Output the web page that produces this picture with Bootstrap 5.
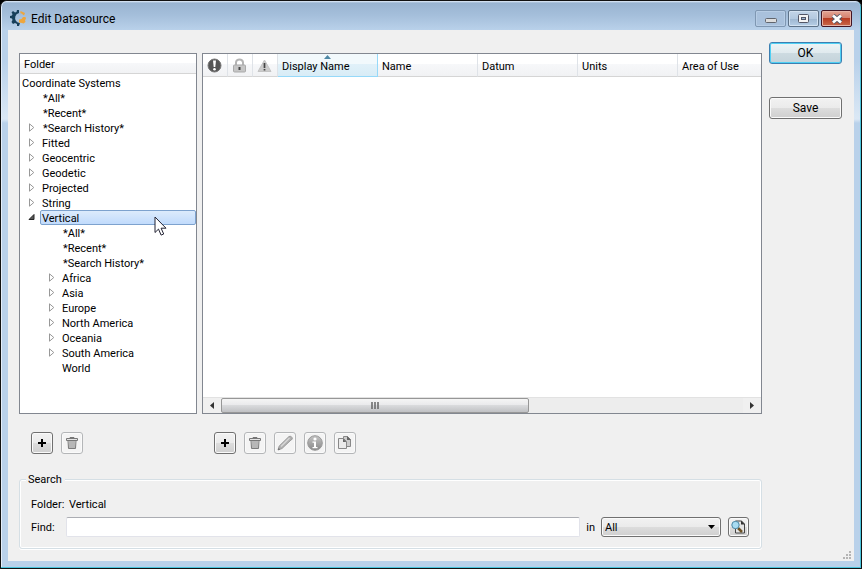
<!DOCTYPE html>
<html lang="en">
<head>
<meta charset="utf-8">
<meta name="viewport" content="width=device-width, initial-scale=1">
<title>Edit Datasource</title>
<link href="https://cdn.jsdelivr.net/npm/bootstrap@5.3.0/dist/css/bootstrap.min.css" rel="stylesheet">
<style>
body{background:#000;color:#000;font:11px/15px Roboto,"Liberation Sans",Arial,sans-serif;height:100vh;overflow:hidden}
.frame{height:100vh;border:1px solid #111;border-radius:7px 7px 0 0;padding:0 7px 7px;background:linear-gradient(#b9d1ea 0,#b9d1ea 60px,#dbe8f5 118px,#b9d1ea 122px);box-shadow:inset -1px -1px #49c4dc,inset 1px 1px #e4eefa;background-color:#b9d1ea}
.titlebar{height:29px;margin:0 -6px;padding:0 8px 0 8px;background:linear-gradient(#e4eefa 0,#99b4d1 2px,#a5bfdb 50%,#b9d1ea);border-radius:6px 6px 0 0}
.applogo{margin-top:9px}
.capbtns{gap:2px}
.caption{font-size:12px;line-height:16px;font-weight:400;margin:0 0 0 4px;padding-top:10px}
.capbtn{width:31px;height:17px;padding:0;display:flex;align-items:center;justify-content:center;border:1px solid #5d7288;border-radius:2px;background:linear-gradient(#c3d5e8,#b3c9e0 50%,#9db6d0 51%,#b6cee6);box-shadow:inset 0 0 0 1px #d3e2f1;margin-top:9px}
.capbtn.dim{border-color:#7f97b2;background:#a9c1dc;box-shadow:inset 0 0 0 1px #b7cde5}
.capbtn.close-x{border-color:#431422;background:linear-gradient(#e4a494,#d37f6d 48%,#b83c23 50%,#c9694a);box-shadow:inset 0 0 0 1px #e6b3a7}
.client{background:#f0f0f0;min-height:0;padding:0 12px 12px 11px;gap:7px}
.mainpart{padding-top:23px;min-width:0}
.lists{gap:5px;min-height:0}
.side{width:73px;padding-top:12px;gap:33px}
.panel{background:#fff;border:1px solid #828790;min-width:0}
.folders{width:178px}
.hdr{background:linear-gradient(#fff 45%,#f7f8fa 46%,#f1f2f4);border-bottom:1px solid #d5d5d5}
.folders .hdr{height:20px;line-height:22px;padding-left:4px}
.tree{padding:1px 0 0 2px}
.tree ul{padding-left:20px;margin:0;list-style:none}
.node{display:flex;height:15px;line-height:17px;position:relative;white-space:nowrap}
.node>span.star{padding-left:1px}
.exp{position:absolute;left:-14px;top:3px;width:8px;height:9px;padding:0;border:0;background:none;display:flex}
.node.sel>span{flex:1;line-height:15px;padding-left:1px;margin-left:-2px;border:1px solid #7da2ce;border-radius:2px;background:linear-gradient(#dcebfc,#c1dbfc)}
.pointer{position:absolute;left:112px;top:6px;z-index:2}
.grid-head{table-layout:fixed;width:100%;border-collapse:separate;border-spacing:0}
.grid-head th{height:23px;padding:2px 0 0 4px;font-weight:400;border-right:1px solid #dfe3e8;white-space:nowrap;overflow:hidden}
.grid-head th:last-child{border-right:0}
.grid-head th.ic{width:25px;padding:1px 2px 0 0;text-align:center;line-height:0}
.grid-head th.wide{width:100px}
.grid-head th.sorted{background:linear-gradient(#f2f9fc 45%,#e1f1f9 46%,#d8ecf6);border-right-color:#96d9f9;border-bottom-color:#96d9f9;position:relative}
.sortmark{position:absolute;left:46px;top:1px}
.sbar{height:16px;background:#ededed;border-top:1px solid #e2e2e2}
.sbar button{width:18px;border:0;padding:0;background:#f0f0f0;display:flex;align-items:center;justify-content:center}
.thumb{width:59%;border:1px solid #979797;border-radius:2px;background:linear-gradient(#f5f5f5,#e9e9eb 48%,#d9dadc 50%,#c0c1c4);display:flex;align-items:center;justify-content:center}
.tools{padding:18px 0 25px;gap:5px}
.toolset{gap:8px;padding-left:12px}
.tool,.push,.combo{border:1px solid #707070;border-radius:3px;background:linear-gradient(#f2f2f2,#ebebeb 48%,#dddddd 50%,#cfcfcf);box-shadow:inset 0 0 0 1px #fafafa;color:#000}
.tool{width:22px;height:22px;padding:0;display:flex;align-items:center;justify-content:center;flex:none}
.tool:disabled{border-color:#b4b6b8;background:#f4f4f4}
.tool.find-go{width:21px;height:20px}
.push{height:22px;font-size:12px;line-height:18px;padding:0;text-align:center}
.push.primary{border-color:#3c7fb1;box-shadow:inset 0 0 0 1px #4fd0f4;background:linear-gradient(#edf4f6,#e0eaee 48%,#cddbe1 50%,#c4d3da)}
.group{border:1px solid #d5dfe5;border-radius:3px;box-shadow:inset 0 0 0 1px #fff,0 1px #fff;height:70px;padding:0 12px 0 11px;position:relative}
.group legend{position:absolute;left:6px;top:-8px;width:auto;background:#f0f0f0;padding:0 3px 0 2px;margin:0;font-size:11px;line-height:15px}
.group .fld{width:38px}
.folderrow{padding-top:17px}
.findrow{height:20px;margin-top:5px}
.findrow .fld{width:35px}
.findbox{min-width:0;height:20px;border:1px solid #e2e3ea;border-top-color:#abadb3;border-radius:2px;background:#fff;padding:0 3px;margin:0 6px 0 0}
.combo{width:120px;height:20px;appearance:none;padding:0 3px;margin:0 7px 0 6px;background:url("data:image/svg+xml,%3Csvg xmlns='http://www.w3.org/2000/svg' width='7' height='4'%3E%3Cpath d='M0 0h7L3.500 4z'/%3E%3C/svg%3E") no-repeat right 5px center,linear-gradient(#f2f2f2,#ebebeb 48%,#dddddd 50%,#cfcfcf)}
.grip{position:absolute;right:9px;bottom:8px}
</style>
<script src="https://cdn.jsdelivr.net/npm/bootstrap@5.3.0/dist/js/bootstrap.bundle.min.js" defer></script>
</head>
<body>
<svg width="0" height="0" class="position-absolute" aria-hidden="true">
<defs>
<linearGradient id="gr" x1="0" y1="0" x2="0" y2="1"><stop stop-color="#c4c4c4"/><stop offset="1" stop-color="#888"/></linearGradient>
<symbol id="closed" viewBox="0 0 8 9"><path d="M1.500 .8v7.400L5.800 4.500z" fill="#fff" stroke="#989898"/></symbol>
<symbol id="trash" viewBox="0 0 14 14"><path d="M5 2.500V1.500h4v1" fill="none" stroke="#777"/><path d="M1.500 2.500h11v2h-11zM3 4.500l.5 8h7l.5-8" fill="#e4e4e4" stroke="#777"/><path d="M5.500 5v7.500M7.500 5v7.500M9.500 5v7.500" transform="translate(-.5)" stroke="#8a8a8a" fill="none"/></symbol>
<symbol id="plus" viewBox="0 0 10 10"><path d="M5 1v8M1 5h8" stroke="#000" stroke-width="2"/></symbol>
</defs>
</svg>
<div class="frame d-flex flex-column position-relative">
  <header class="titlebar d-flex align-items-start">
    <svg class="applogo" width="17" height="17" viewBox="0 0 17 17" aria-hidden="true"><path d="M9 0v3Q6 3.500 5.300 6.500T6 11q1.500 2 4 2l-1 3H7v-2L5 13l-2 1-1.500-2L2.500 10 2 8.500 0 8V6l2-.5L2.500 4 1.500 2.500 3 1l2 1.500L6.500 2 7 0z" fill="#173f5a"/><path d="M10.500 1 15 3l-1 2.500-2.500-2-1.200-.3zM9 9.500q3 0 4-2.500h2.500l.5 2-1 1 .5 2-2 1.500-1.500-.5L9 12.500z" fill="#eea63d"/></svg>
    <h1 class="caption flex-grow-1">Edit Datasource</h1>
    <div class="capbtns d-flex">
      <button class="capbtn dim" aria-label="Minimize"><svg width="12" height="9"><rect x=".5" y="4.500" width="11" height="4" rx="1" fill="#ddd" stroke="#60656d"/></svg></button>
      <button class="capbtn" aria-label="Maximize"><svg width="11" height="9"><rect x=".5" y=".5" width="10" height="8" rx="1" fill="#f4f4f4" stroke="#535666"/><rect x="3.500" y="3.500" width="4" height="2" fill="#9db6d0" stroke="#535666"/></svg></button>
      <button class="capbtn close-x" aria-label="Close"><svg width="12" height="10"><path d="M2 1.500l8 7m0-7l-8 7" stroke="#535666" stroke-width="4.500"/><path d="M2 1.500l8 7m0-7l-8 7" stroke="#fff" stroke-width="2.800"/></svg></button>
    </div>
  </header>
  <main class="client d-flex flex-grow-1">
    <div class="mainpart flex-grow-1 d-flex flex-column">
      <div class="lists d-flex flex-grow-1">
        <nav class="panel folders flex-shrink-0" aria-label="Folders">
          <div class="hdr">Folder</div>
          <div class="tree">
            <div class="node"><span>Coordinate Systems</span></div>
            <ul>
              <li class="node"><span class="star">*All*</span></li>
              <li class="node"><span class="star">*Recent*</span></li>
              <li class="node"><button class="exp" aria-label="Expand Search History"><svg width="8" height="9"><use href="#closed"/></svg></button><span class="star">*Search History*</span></li>
              <li class="node"><button class="exp" aria-label="Expand Fitted"><svg width="8" height="9"><use href="#closed"/></svg></button><span>Fitted</span></li>
              <li class="node"><button class="exp" aria-label="Expand Geocentric"><svg width="8" height="9"><use href="#closed"/></svg></button><span>Geocentric</span></li>
              <li class="node"><button class="exp" aria-label="Expand Geodetic"><svg width="8" height="9"><use href="#closed"/></svg></button><span>Geodetic</span></li>
              <li class="node"><button class="exp" aria-label="Expand Projected"><svg width="8" height="9"><use href="#closed"/></svg></button><span>Projected</span></li>
              <li class="node"><button class="exp" aria-label="Expand String"><svg width="8" height="9"><use href="#closed"/></svg></button><span>String</span></li>
              <li><div class="node sel"><button class="exp" aria-label="Collapse Vertical"><svg width="8" height="9"><path d="M6 1.500v5H1z" fill="#595959" stroke="#262626"/></svg></button><span>Vertical</span>
                <svg class="pointer" width="13" height="21" viewBox="0 0 13 21" aria-hidden="true"><path d="M1 1v15.500l3.500-3.400 2.600 6 2.600-1.100-2.600-5.800H12z" fill="#fff" stroke="#223"/></svg></div>
                <ul>
                  <li class="node"><span class="star">*All*</span></li>
                  <li class="node"><span class="star">*Recent*</span></li>
                  <li class="node"><span class="star">*Search History*</span></li>
                  <li class="node"><button class="exp" aria-label="Expand Africa"><svg width="8" height="9"><use href="#closed"/></svg></button><span>Africa</span></li>
                  <li class="node"><button class="exp" aria-label="Expand Asia"><svg width="8" height="9"><use href="#closed"/></svg></button><span>Asia</span></li>
                  <li class="node"><button class="exp" aria-label="Expand Europe"><svg width="8" height="9"><use href="#closed"/></svg></button><span>Europe</span></li>
                  <li class="node"><button class="exp" aria-label="Expand North America"><svg width="8" height="9"><use href="#closed"/></svg></button><span>North America</span></li>
                  <li class="node"><button class="exp" aria-label="Expand Oceania"><svg width="8" height="9"><use href="#closed"/></svg></button><span>Oceania</span></li>
                  <li class="node"><button class="exp" aria-label="Expand South America"><svg width="8" height="9"><use href="#closed"/></svg></button><span>South America</span></li>
                  <li class="node"><span>World</span></li>
                </ul>
              </li>
            </ul>
          </div>
        </nav>
        <section class="panel flex-grow-1 d-flex flex-column" aria-label="Coordinate systems">
          <div class="flex-grow-1">
            <table class="grid-head">
              <thead><tr>
                <th class="hdr ic" aria-label="Status"><svg width="15" height="15" viewBox="0 0 15 15"><circle cx="7.500" cy="7.500" r="6.500" fill="#555" stroke="#777"/><path d="M6 2.500h3L8.300 9H6.700z" fill="#fff"/><circle cx="7.500" cy="11.200" r="1.300" fill="#fff"/></svg></th>
                <th class="hdr ic" aria-label="Locked"><svg width="15" height="15" viewBox="0 0 15 15"><path d="M4 7V4.500a3.500 3 0 017 0V7" fill="none" stroke="#b4b4b4" stroke-width="2"/><rect x="1.500" y="7" width="12" height="7" rx="1" fill="#c6c6c6" stroke="#aaa"/><path d="M7.500 9v3" stroke="#444" stroke-width="2"/></svg></th>
                <th class="hdr ic" aria-label="Warning"><svg width="15" height="15" viewBox="0 0 15 15"><path d="M7.500 2 14 13.500H1z" fill="#ccc" stroke="#c4c4c4" stroke-linejoin="round"/><path d="M7.500 5v5M7.500 11v1.500" stroke="#444" stroke-width="1.700"/></svg></th>
                <th class="hdr wide sorted" aria-sort="ascending">Display Name<svg class="sortmark" width="7" height="4"><path d="M0 4h7L3.500 0z" fill="#4e88a5"/></svg></th>
                <th class="hdr wide">Name</th><th class="hdr wide">Datum</th><th class="hdr wide">Units</th><th class="hdr">Area of Use</th>
              </tr></thead>
            </table>
          </div>
          <div class="sbar d-flex">
            <button aria-label="Scroll left"><svg width="4" height="7"><path d="M4 0v7L0 3.500z" fill="#333"/></svg></button>
            <div class="flex-grow-1 d-flex"><div class="thumb"><svg width="8" height="7"><path d="M1 0v7M4 0v7M7 0v7" stroke="#666" stroke-width="1.500"/></svg></div></div>
            <button aria-label="Scroll right"><svg width="4" height="7"><path d="M0 0v7L4 3.500z" fill="#333"/></svg></button>
          </div>
        </section>
      </div>
      <div class="tools d-flex">
        <div class="folders toolset flex-shrink-0 d-flex">
          <button class="tool" aria-label="Add folder"><svg width="10" height="10"><use href="#plus"/></svg></button>
          <button class="tool" disabled aria-label="Delete folder"><svg width="14" height="14"><use href="#trash"/></svg></button>
        </div>
        <div class="toolset d-flex">
          <button class="tool" aria-label="Add"><svg width="10" height="10"><use href="#plus"/></svg></button>
          <button class="tool" disabled aria-label="Delete"><svg width="14" height="14"><use href="#trash"/></svg></button>
          <button class="tool" disabled aria-label="Edit"><svg width="16" height="16" viewBox="0 0 16 16"><path d="M1 15l1.200-4L12 1.500q2-1 3 1T14 5L5 13.500z" fill="#b0b0b0" stroke="#9c9c9c"/><path d="M4 11.500 12.500 3" stroke="#d5d5d5" stroke-width="1.500"/><path d="M1 15l.7-2 1.400 1.400z" fill="#666"/></svg></button>
          <button class="tool" disabled aria-label="Information"><svg width="16" height="16" viewBox="0 0 16 16"><circle cx="8" cy="8" r="7.300" fill="url(#gr)" stroke="#999"/><circle cx="8" cy="4" r="1.600" fill="#fff"/><path d="M5.500 6.500H9V12h1.500v1.200h-5V12H7V7.700H5.500z" fill="#fff"/></svg></button>
          <button class="tool" disabled aria-label="Copy"><svg width="14" height="14" viewBox="0 0 14 14"><path d="M5.500 .5h4l3 3v7h-7z" fill="#ccc" stroke="#888"/><path d="M9 0v4h4z" fill="#666"/><path d="M.5 2.500h5l3 3v7h-8z" fill="#eaeaea" stroke="#888"/><path d="M5 2.500v3.500h3.500z" fill="#666"/></svg></button>
        </div>
      </div>
      <fieldset class="group">
        <legend>Search</legend>
        <div class="folderrow d-flex"><span class="fld">Folder:</span><span>Vertical</span></div>
        <div class="findrow d-flex align-items-center">
          <label class="fld" for="find">Find:</label>
          <input id="find" class="findbox flex-grow-1" type="text">
          <label for="scope">in</label>
          <select id="scope" class="combo"><option>All</option></select>
          <button class="tool find-go" type="button" aria-label="Search"><svg width="15" height="14" viewBox="0 0 15 14"><path d="M4.500 1h6l3 3v9h-9z" fill="#e4e4e4" stroke="#444"/><path d="M10 .5v4h4z" fill="#333"/><path d="M7 8l4 4" stroke="#6b5125" stroke-width="2.500"/><circle cx="4.500" cy="5" r="3.700" fill="#a8dcf2" stroke="#4b87a4"/></svg></button>
        </div>
      </fieldset>
    </div>
    <div class="side d-flex flex-column flex-shrink-0">
      <button class="push primary">OK</button>
      <button class="push">Save</button>
    </div>
  </main>
  <svg class="grip" width="9" height="9" fill="#b4b4b4" aria-hidden="true"><path d="M6 0h2v2H6zM6 3h2v2H6zM3 3h2v2H3zM6 6h2v2H6zM3 6h2v2H3zM0 6h2v2H0z"/></svg>
</div>
</body>
</html>
